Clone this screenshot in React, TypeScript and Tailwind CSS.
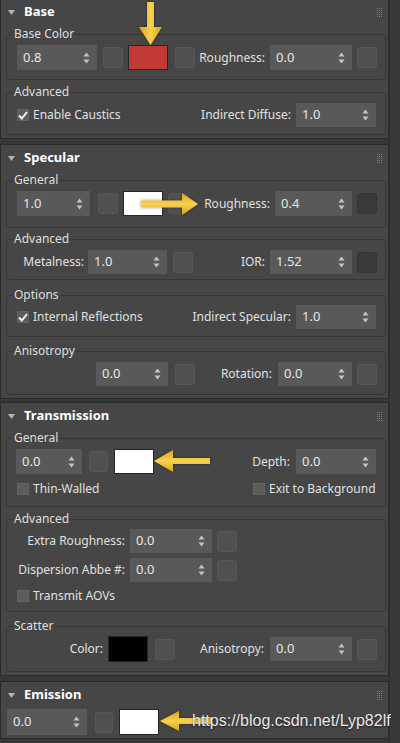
import React from 'react';

// small up/down glyph on the right of every spinner
const Updown = () => (
    <svg width="7" height="12" viewBox="0 0 7 12" className="shrink-0">
        <path d="M3.5 0.5 L6.5 4.5 L0.5 4.5 Z" fill="#c4c4c4" />
        <path d="M0.5 7.5 L6.5 7.5 L3.5 11.5 Z" fill="#c4c4c4" />
    </svg>
);

function Spinner({ value, className }: { value: string; className: string }) {
    return (
        <div className={`${className} shrink-0 bg-[#595959] flex items-center justify-between pl-[6px] pr-[7px] text-[13px] text-[#e6e6e6]`}>
            <span>{value}</span>
            <Updown />
        </div>
    );
}

function Btn({ className, dark }: { className: string; dark?: boolean }) {
    return (
        <div
            className={`${className} shrink-0 rounded-[3px] border ${dark ? 'bg-[#3a3a3a] border-[#343434]' : 'bg-[#505050] border-[#575757]'}`}
        />
    );
}

function Swatch({ className }: { className: string }) {
    return <div className={`${className} shrink-0 border border-[#262626]`} />;
}

function Check({ label, checked }: { label: string; checked?: boolean }) {
    return (
        <div className="flex items-center">
            <div className="w-[12px] h-[12px] bg-[#5c5c5c] border border-[#646464] flex items-center justify-center">
                {checked && (
                    <svg width="10" height="9" viewBox="0 0 10 9">
                        <path d="M1 4.5 L3.8 7.5 L9 1" stroke="#f2f2f2" strokeWidth="2" fill="none" />
                    </svg>
                )}
            </div>
            <span className="ml-[4px]">{label}</span>
        </div>
    );
}

function Group({ title, className, children }: { title: string; className: string; children: React.ReactNode }) {
    return (
        <fieldset className={`border border-[#363636] rounded-[3px] ${className}`}>
            <legend className="ml-[6px] px-[1px] text-[12px] leading-[14px] text-[#dedede]">{title}</legend>
            {children}
        </fieldset>
    );
}

const Grip = () => (
    <svg width="6" height="9" viewBox="0 0 6 9" className="ml-auto mr-[3px]">
        {[0, 2, 4, 6, 8].map((y) =>
            [0, 2, 4].map((x) => <rect key={`${x}-${y}`} x={x} y={y} width="1" height="1" fill="#7a7a7a" />)
        )}
    </svg>
);

function Rollout({ title, className, children }: { title: string; className: string; children: React.ReactNode }) {
    return (
        <div className={`bg-[#464646] border border-[#2b2b2b] pl-[5px] pr-[2px] pb-[3px] ${className}`}>
            <div className="h-[26px] -ml-[5px] pl-[7px] flex items-center">
                <svg width="7" height="5" viewBox="0 0 7 5">
                    <path d="M0 0 H7 L3.5 5 Z" fill="#b4b4b4" />
                </svg>
                <span className="ml-[9px] font-bold text-[13px] text-white">{title}</span>
                <Grip />
            </div>
            {children}
        </div>
    );
}

export default function App() {
    return (
        <div className="w-[400px] h-[743px] overflow-hidden relative flex bg-[#373737] text-[12px] text-[#e0e0e0] font-['Noto_Sans',sans-serif]">
            <div className="w-[389px] shrink-0 flex flex-col -mt-[2px]">
                {/* Base */}
                <Rollout title="Base" className="">
                    <Group title="Base Color" className="mt-[2px] pt-[4px] pb-[9px]">
                        <div className="flex items-center h-[25px] pr-[8px]">
                            <Spinner value="0.8" className="ml-[10px] w-[80px] h-[25px]" />
                            <Btn className="ml-[6px] w-[20px] h-[21px]" />
                            <Swatch className="ml-[5px] w-[40px] h-[25px] bg-[#c23a35]" />
                            <Btn className="ml-[7px] w-[20px] h-[21px]" />
                            <span className="flex-1 text-right pr-[5px]">Roughness:</span>
                            <Spinner value="0.0" className="w-[82px] h-[25px]" />
                            <Btn className="ml-[5px] w-[20px] h-[21px]" />
                        </div>
                    </Group>
                    <Group title="Advanced" className="mt-[5px] pt-[4px] pb-[7px]">
                        <div className="flex items-center h-[24px] pr-[9px]">
                            <div className="ml-[10px]">
                                <Check label="Enable Caustics" checked />
                            </div>
                            <span className="flex-1 text-right pr-[5px]">Indirect Diffuse:</span>
                            <Spinner value="1.0" className="w-[80px] h-[24px]" />
                        </div>
                    </Group>
                </Rollout>

                {/* Specular */}
                <Rollout title="Specular" className="mt-[5px]">
                    <Group title="General" className="mt-[2px] pt-[4px] pb-[11px]">
                        <div className="flex items-center h-[25px] pr-[8px]">
                            <Spinner value="1.0" className="ml-[10px] w-[73px] h-[25px]" />
                            <Btn className="ml-[8px] w-[20px] h-[21px]" />
                            <Swatch className="ml-[5px] w-[40px] h-[25px] bg-white" />
                            <Btn className="ml-[5px] w-[20px] h-[21px]" />
                            <span className="flex-1 text-right pr-[5px]">Roughness:</span>
                            <Spinner value="0.4" className="w-[77px] h-[25px]" />
                            <Btn className="ml-[5px] w-[20px] h-[21px]" dark />
                        </div>
                    </Group>
                    <Group title="Advanced" className="mt-[4px] pt-[4px] pb-[5px]">
                        <div className="flex items-center h-[24px] pr-[8px]">
                            <span className="w-[81px] shrink-0 text-right pr-[4px]">Metalness:</span>
                            <Spinner value="1.0" className="w-[79px] h-[24px]" />
                            <Btn className="ml-[6px] w-[20px] h-[21px]" />
                            <span className="flex-1 text-right pr-[5px]">IOR:</span>
                            <Spinner value="1.52" className="w-[82px] h-[24px]" />
                            <Btn className="ml-[5px] w-[20px] h-[21px]" dark />
                        </div>
                    </Group>
                    <Group title="Options" className="mt-[8px] pt-[3px] pb-[7px]">
                        <div className="flex items-center h-[24px] pr-[9px]">
                            <div className="ml-[10px]">
                                <Check label="Internal Reflections" checked />
                            </div>
                            <span className="flex-1 text-right pr-[5px]">Indirect Specular:</span>
                            <Spinner value="1.0" className="w-[80px] h-[24px]" />
                        </div>
                    </Group>
                    <Group title="Anisotropy" className="mt-[7px] pt-[4px] pb-[8px]">
                        <div className="flex items-center h-[24px] pr-[8px]">
                            <Spinner value="0.0" className="ml-[89px] w-[72px] h-[24px]" />
                            <Btn className="ml-[7px] w-[20px] h-[21px]" />
                            <span className="flex-1 text-right pr-[6px]">Rotation:</span>
                            <Spinner value="0.0" className="w-[74px] h-[24px]" />
                            <Btn className="ml-[5px] w-[20px] h-[21px]" />
                        </div>
                    </Group>
                </Rollout>

                {/* Transmission */}
                <Rollout title="Transmission" className="mt-[3px]">
                    <Group title="General" className="mt-[2px] pt-[4px] pb-[7px]">
                        <div className="flex items-center h-[25px] pr-[9px]">
                            <Spinner value="0.0" className="ml-[9px] w-[66px] h-[25px]" />
                            <Btn className="ml-[7px] w-[19px] h-[21px]" />
                            <Swatch className="ml-[6px] w-[40px] h-[25px] bg-white" />
                            <span className="flex-1 text-right pr-[6px]">Depth:</span>
                            <Spinner value="0.0" className="w-[80px] h-[25px]" />
                        </div>
                        <div className="flex items-center h-[20px] mt-[5px]">
                            <div className="w-[246px] shrink-0 pl-[10px]">
                                <Check label="Thin-Walled" />
                            </div>
                            <Check label="Exit to Background" />
                        </div>
                    </Group>
                    <Group title="Advanced" className="mt-[5px] pt-[3px] pb-[5px]">
                        <div className="flex items-center h-[24px]">
                            <span className="w-[123px] shrink-0 text-right pr-[5px]">Extra Roughness:</span>
                            <Spinner value="0.0" className="w-[82px] h-[24px]" />
                            <Btn className="ml-[5px] w-[20px] h-[21px]" />
                        </div>
                        <div className="flex items-center h-[24px] mt-[5px]">
                            <span className="w-[123px] shrink-0 text-right pr-[5px]">Dispersion Abbe #:</span>
                            <Spinner value="0.0" className="w-[82px] h-[24px]" />
                            <Btn className="ml-[5px] w-[20px] h-[21px]" />
                        </div>
                        <div className="flex items-center h-[20px] mt-[4px] pl-[10px]">
                            <Check label="Transmit AOVs" />
                        </div>
                    </Group>
                    <Group title="Scatter" className="mt-[7px] pt-[3px] pb-[9px]">
                        <div className="flex items-center h-[26px] pr-[8px]">
                            <span className="w-[101px] shrink-0 text-right pr-[5px]">Color:</span>
                            <Swatch className="w-[40px] h-[26px] bg-black" />
                            <Btn className="ml-[7px] w-[20px] h-[21px]" />
                            <span className="flex-1 text-right pr-[6px]">Anisotropy:</span>
                            <Spinner value="0.0" className="w-[82px] h-[24px]" />
                            <Btn className="ml-[5px] w-[20px] h-[21px]" />
                        </div>
                    </Group>
                </Rollout>

                {/* Emission */}
                <Rollout title="Emission" className="mt-[5px]">
                    <div className="flex items-center h-[26px] mt-[1px]">
                        <Spinner value="0.0" className="ml-[1px] w-[80px] h-[26px]" />
                        <Btn className="ml-[8px] w-[18px] h-[21px]" />
                        <Swatch className="ml-[6px] w-[40px] h-[26px] bg-white" />
                    </div>
                </Rollout>
            </div>

            {/* scrollbar strip */}
            <div className="flex-1 bg-[#393939] border-l border-[#2e2e2e]" />

            {/* yellow annotation arrows */}
            <svg className="absolute left-0 top-0 pointer-events-none" width="400" height="743" viewBox="0 0 400 743">
                <defs>
                    <linearGradient id="gv" x1="0" x2="1" y1="0" y2="0">
                        <stop offset="0" stopColor="#dca21a" />
                        <stop offset="0.5" stopColor="#f7d24e" />
                        <stop offset="1" stopColor="#dca21a" />
                    </linearGradient>
                    <linearGradient id="gh" x1="0" x2="0" y1="0" y2="1">
                        <stop offset="0" stopColor="#dca21a" />
                        <stop offset="0.5" stopColor="#f7d24e" />
                        <stop offset="1" stopColor="#dca21a" />
                    </linearGradient>
                    <filter id="glow" x="-30%" y="-30%" width="160%" height="160%">
                        <feDropShadow dx="0" dy="0" stdDeviation="1.5" floodColor="#000" floodOpacity="0.45" />
                    </filter>
                </defs>
                <g filter="url(#glow)">
                    {/* base color, pointing down */}
                    <path d="M147 2 H154 V27 H162 L150.5 45 L139 27 H147 Z" fill="url(#gv)" />
                    {/* specular roughness, pointing right */}
                    <path d="M141 200.5 H182 V193 L198 204 L182 215 V207.5 H141 Z" fill="url(#gh)" />
                    {/* transmission, pointing left */}
                    <path d="M210 458 H173 V450 L154 461 L173 472 V464 H210 Z" fill="url(#gh)" />
                    {/* emission, pointing left */}
                    <path d="M212 718 H179 V711 L160 721 L179 731 V724 H212 Z" fill="url(#gh)" />
                </g>
            </svg>

            {/* watermark */}
            <div className="absolute left-[192px] top-[712px] leading-[18px] text-[16px] text-[#e8e8e8] font-['Liberation_Sans',Arial,sans-serif] [text-shadow:0_1px_2px_rgba(0,0,0,0.6)]">
                https://blog.csdn.net/Lyp82lf
            </div>
        </div>
    );
}
